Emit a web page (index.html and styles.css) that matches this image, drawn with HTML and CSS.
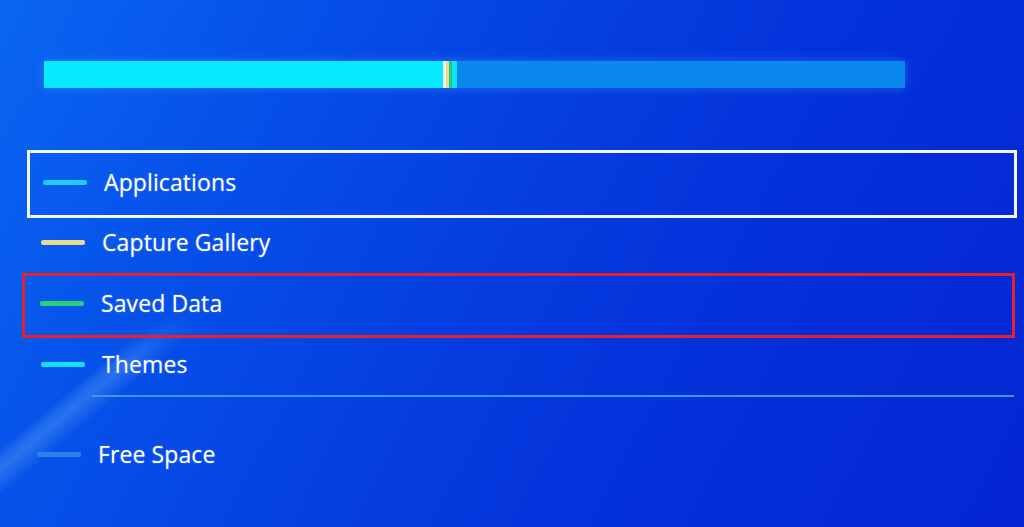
FILE: index.html
```html
<!DOCTYPE html>
<html lang="en">
<head>
<meta charset="utf-8">
<title>Storage</title>
<link rel="stylesheet" href="styles.css">
</head>
<body>
<div class="screen">
  <div class="bar">
    <div class="seg seg-apps" style="width:399px"></div>
    <div class="seg seg-white" style="width:3px"></div>
    <div class="seg seg-capture" style="width:3px"></div>
    <div class="seg seg-saved" style="width:3px"></div>
    <div class="seg seg-themes" style="width:5px"></div>
    <div class="seg seg-free"></div>
  </div>
  <ul class="list">
    <li class="row row-selected"><span class="dash dash-apps"></span><span class="label">Applications</span></li>
    <li class="row"><span class="dash dash-capture"></span><span class="label">Capture Gallery</span></li>
    <li class="row row-marked"><span class="dash dash-saved"></span><span class="label">Saved Data</span></li>
    <li class="row"><span class="dash dash-themes"></span><span class="label">Themes</span></li>
    <li class="divider"></li>
    <li class="row row-free"><span class="dash dash-free"></span><span class="label">Free Space</span></li>
  </ul>
</div>
</body>
</html>
```

FILE: styles.css
```css
html, body {
  margin: 0;
  padding: 0;
}
body {
  position: relative;
  width: 1024px;
  height: 527px;
  overflow: hidden;
  font-family: "Open Sans", "Noto Sans", "DejaVu Sans", sans-serif;
  color: #ffffff;
  background: linear-gradient(118deg, #0a66f2 0%, #064fe8 25%, #053de0 48%, #042ed8 75%, #0426d2 100%);
}
/* decorative light streak of the background wave */
body::before {
  content: "";
  position: absolute;
  left: 0;
  top: 300px;
  width: 300px;
  height: 227px;
  background: linear-gradient(140deg,
    rgba(120, 190, 255, 0) 31%,
    rgba(120, 190, 255, 0.22) 33.5%,
    rgba(120, 190, 255, 0.30) 35.5%,
    rgba(120, 190, 255, 0.14) 38.5%,
    rgba(120, 190, 255, 0) 41%);
  -webkit-mask-image: linear-gradient(to bottom, transparent 5%, #000 30%);
  mask-image: linear-gradient(to bottom, transparent 5%, #000 30%);
  pointer-events: none;
}
.screen {
  position: relative;
  width: 1024px;
  height: 527px;
  box-sizing: border-box;
  padding-top: 61px;
}
.bar {
  display: flex;
  margin-left: 44px;
  width: 861px;
  height: 27px;
  box-shadow: 0 0 10px rgba(60, 170, 255, 0.45);
}
.seg {
  height: 100%;
}
.seg-apps { background: #07eaff; }
.seg-white { background: #f4f6f0; }
.seg-capture { background: #e8dc8c; }
.seg-saved { background: #22c88a; }
.seg-themes { background: #10e4fc; }
.seg-free {
  flex: 1;
  background: #0a88ee;
}
.list {
  list-style: none;
  margin: 64px 0 0 27px;
  padding: 0;
  width: 987px;
}
.row {
  display: flex;
  align-items: center;
  gap: 17px;
  height: 61px;
  padding-left: 14px;
  padding-bottom: 4px;
  box-sizing: border-box;
}
.row-selected {
  outline: 3px solid #f2f6ff;
  outline-offset: -1px;
  height: 64px;
  margin-bottom: -2px;
  padding-left: 14px;
  margin-left: 2px;
  margin-right: -1px;
}
.row-marked {
  outline: 3px solid #e6202e;
  outline-offset: -1px;
  margin-left: -3px;
  margin-right: 1px;
  padding-left: 16px;
}
.row-free {
  margin-top: 29px;
  padding-left: 10px;
}
.dash {
  display: block;
  width: 44px;
  height: 5px;
  border-radius: 2px;
  flex: none;
}
.dash-apps { background: #1ccdf8; }
.dash-capture { background: #e4dc92; }
.dash-saved { background: #28d07a; }
.dash-themes { background: #14e2fa; }
.dash-free { background: #2c80ec; }
.label {
  font-size: 23px;
  line-height: 1;
  letter-spacing: 0.1px;
  text-shadow: 0 0 2px rgba(255, 255, 255, 0.35);
}
.divider {
  height: 2px;
  margin-left: 65px;
  margin-top: -2px;
  background: #3a9af2;
}
```
